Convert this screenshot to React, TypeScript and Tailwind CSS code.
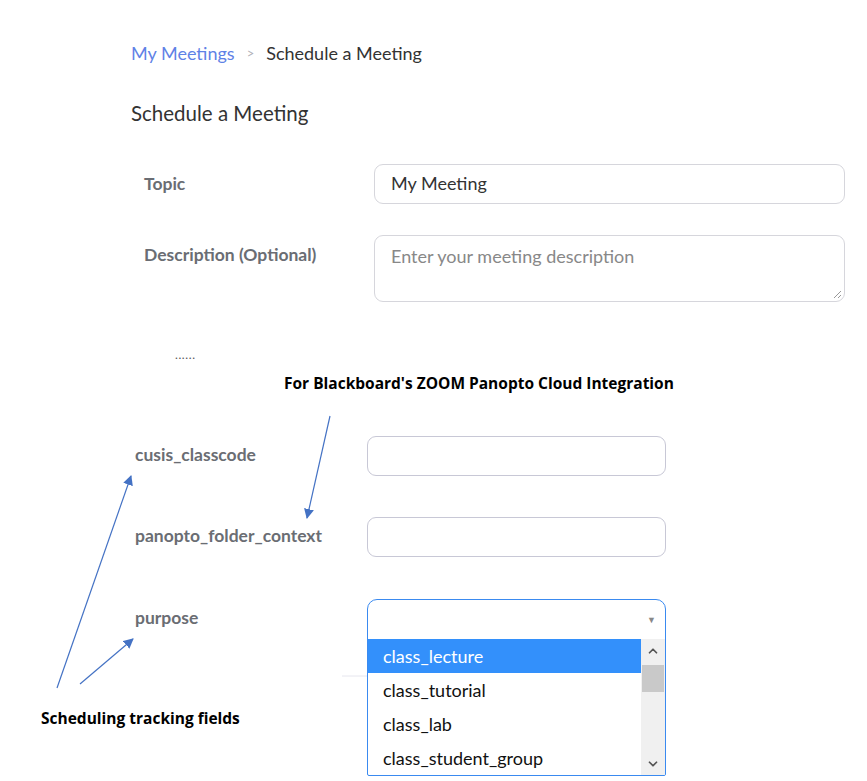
import { ChevronUp, ChevronDown } from "lucide-react";

const tracking = ["class_lecture", "class_tutorial", "class_lab", "class_student_group"];

function Arrows() {
  return (
    <svg className="absolute inset-0 pointer-events-none" width="867" height="781">
      <defs>
        <marker id="head" markerWidth="10" markerHeight="10" refX="9" refY="5" orient="auto" markerUnits="userSpaceOnUse">
          <path d="M0,0 L10,5 L0,10 z" fill="#4472c4" />
        </marker>
      </defs>
      <line x1="330" y1="416" x2="307" y2="518" stroke="#4472c4" strokeWidth="1.2" markerEnd="url(#head)" />
      <line x1="57" y1="688" x2="131" y2="476" stroke="#4472c4" strokeWidth="1.2" markerEnd="url(#head)" />
      <line x1="80" y1="684" x2="133" y2="639" stroke="#4472c4" strokeWidth="1.2" markerEnd="url(#head)" />
      <line x1="342" y1="676" x2="367" y2="676" stroke="#e6e6ee" strokeWidth="1" />
    </svg>
  );
}

function Row({ label, children, top }: { label: string; children: React.ReactNode; top: string }) {
  return (
    <div className={`flex items-start ${top}`}>
      <div className="w-[232px] pl-[135px] box-content shrink-0 pt-[8px] text-[17.5px] font-bold text-[#6a6d73] leading-[22px]">
        {label}
      </div>
      {children}
    </div>
  );
}

export default function App() {
  return (
    <div className="relative w-[867px] h-[781px] overflow-hidden bg-white font-['Lato','Noto_Sans',sans-serif]">
      <nav className="flex items-center pl-[131px] pt-[41px] text-[18px] leading-[24px]">
        <span className="text-[#5f82e6]">My Meetings</span>
        <span className="mx-[12px] text-[13px] text-[#b0b0b8]">&gt;</span>
        <span className="text-[#333]">Schedule a Meeting</span>
      </nav>

      <h1 className="pl-[131px] mt-[34px] text-[20.5px] leading-[28px] text-[#333]">Schedule a Meeting</h1>

      <div className="flex items-start mt-[37px]">
        <div className="w-[230px] pl-[144px] box-content shrink-0 pt-[9px] text-[17.5px] font-bold text-[#6a6d73] leading-[22px]">Topic</div>
        <div className="w-[471px] h-[40px] rounded-[9px] border border-[#d6d6dc] px-[16px] text-[18px] leading-[36px] text-[#333]">
          My Meeting
        </div>
      </div>

      <div className="flex items-start mt-[31px]">
        <div className="w-[230px] pl-[144px] box-content shrink-0 pt-[9px] text-[17.5px] font-bold text-[#6a6d73] leading-[22px]">Description (Optional)</div>
        <div className="relative w-[471px] h-[67px] rounded-[9px] border border-[#d6d6dc] px-[16px] pt-[8px] text-[18px] leading-[24px] text-[#888]">
          Enter your meeting description
          <svg className="absolute right-[2px] bottom-[2px]" width="9" height="9">
            <line x1="8" y1="1" x2="1" y2="8" stroke="#999" />
            <line x1="8" y1="5" x2="5" y2="8" stroke="#999" />
          </svg>
        </div>
      </div>

      <div className="pl-[175px] mt-[46px] text-[12px] leading-[14px] text-[#555] tracking-[0.6px]">......</div>

      <div className="pl-[284px] mt-[10px] font-['Open_Sans',sans-serif] font-bold text-[15.5px] leading-[22px] text-black">
        For Blackboard's ZOOM Panopto Cloud Integration
      </div>

      <Row label="cusis_classcode" top="mt-[42px]">
        <div className="w-[299px] h-[40px] rounded-[9px] border border-[#c8c8d6]" />
      </Row>

      <Row label="panopto_folder_context" top="mt-[41px]">
        <div className="w-[299px] h-[40px] rounded-[9px] border border-[#c8c8d6]" />
      </Row>

      <Row label="purpose" top="mt-[42px]">
        <div className="w-[299px] border border-[#3a8af0] rounded-t-[10px] rounded-b-[2px] overflow-hidden">
          <div className="h-[39px] flex items-center justify-end pr-[9px]">
            <span className="text-[9px] text-[#888]">▼</span>
          </div>
          <div className="flex">
            <ul className="flex-1">
              {tracking.map((t, i) => (
                <li
                  key={t}
                  className={`h-[34px] pl-[15px] text-[18px] leading-[34px] ${i === 0 ? "bg-[#3390fb] text-white" : "text-[#111]"}`}
                >
                  {t}
                </li>
              ))}
            </ul>
            <div className="w-[24px] bg-[#f0f0f0] flex flex-col items-center">
              <ChevronUp size={14} strokeWidth={3} className="text-[#555] mt-[5px]" />
              <div className="w-[22px] h-[27px] bg-[#c9c9c9] mt-[7px]" />
              <div className="flex-1" />
              <ChevronDown size={14} strokeWidth={3} className="text-[#555] mb-[4px]" />
            </div>
          </div>
        </div>
      </Row>

      <div className="absolute left-[41px] top-[707px] font-['Open_Sans',sans-serif] font-bold text-[15.5px] leading-[22px] text-black">
        Scheduling tracking fields
      </div>

      <Arrows />
    </div>
  );
}
